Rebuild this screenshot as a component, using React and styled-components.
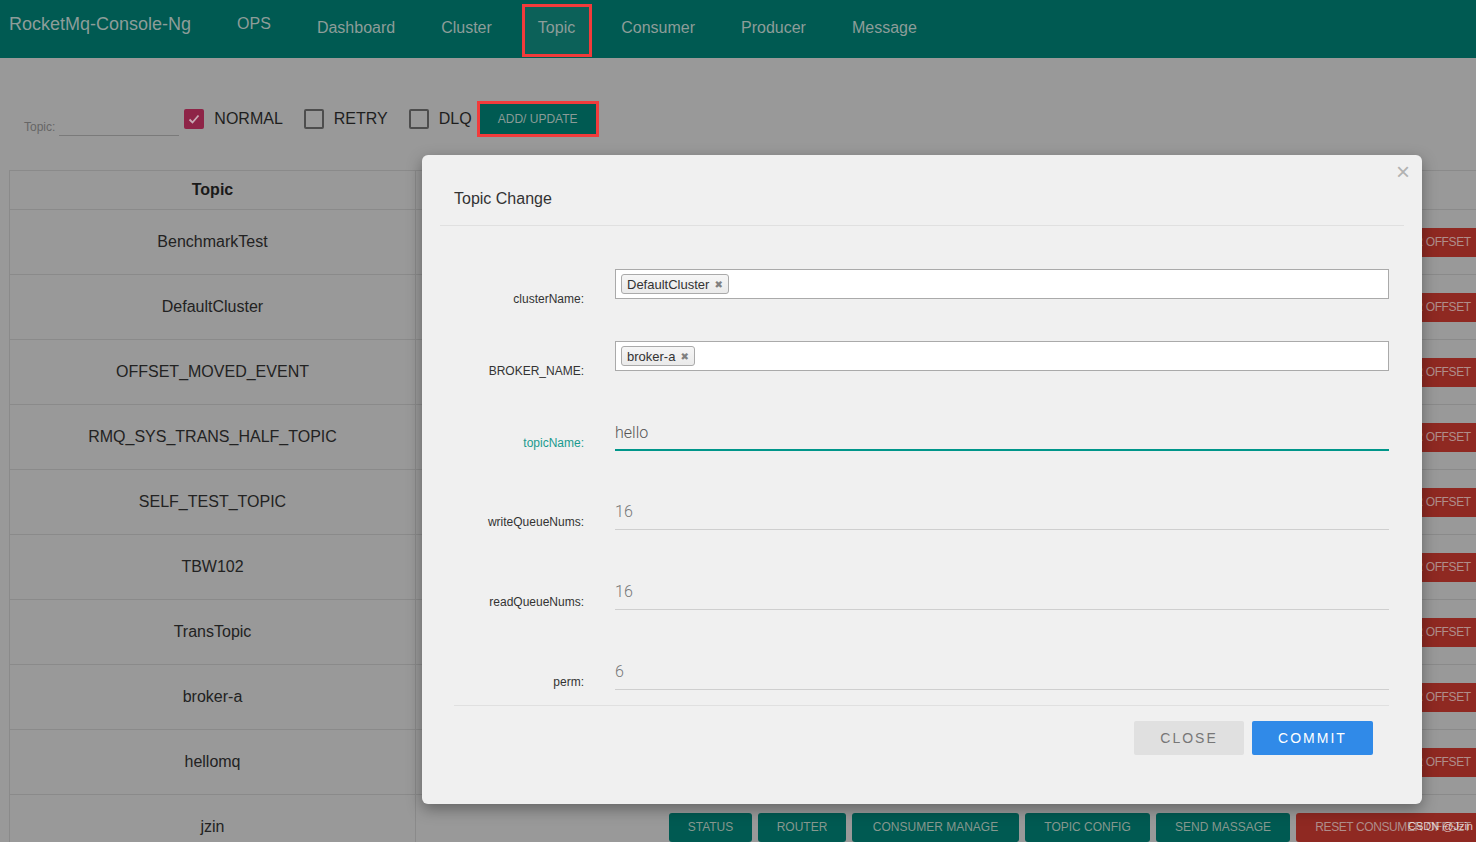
import styled, { createGlobalStyle } from 'styled-components';

const GlobalStyle = createGlobalStyle`
  body {
    margin: 0;
    background: #999999;
    overflow: hidden;
    font-family: "Liberation Sans", Arial, sans-serif;
  }
`;

const Page = styled.div`
  position: relative;
  width: 1476px;
  height: 842px;
  overflow: hidden;
`;

const NavBar = styled.nav`
  display: flex;
  height: 58px;
  padding-left: 9px;
  background: #005a52;
  gap: 16px;
`;

const Brand = styled.div`
  display: flex;
  align-items: center;
  height: 58px;
  padding-bottom: 10px;
  box-sizing: border-box;
  margin-right: 15px;
  font-size: 18px;
  color: #8d9d99;
`;

const NavItem = styled.div`
  display: flex;
  align-items: center;
  box-sizing: border-box;
  height: ${({ $active }) => ($active ? '53px' : '58px')};
  margin: ${({ $active }) => ($active ? '4px -2px 0 -1px' : '0')};
  padding: ${({ $active, $lift }) =>
    $active ? '0 14px 6px 13px' : `0 15px ${$lift ? 10 : 3}px`};
  font-size: 16px;
  color: #8d9d99;
  background: ${({ $active }) => ($active ? '#0c6159' : 'transparent')};
  border: ${({ $active }) => ($active ? '3px solid #f23b3b' : 'none')};
`;

const Main = styled.main`
  padding: 0 9px;
`;

const FilterRow = styled.div`
  display: flex;
  align-items: center;
  height: 36px;
  margin-top: 43px;
  padding-left: 15px;
`;

const SearchGroup = styled.div`
  display: flex;
  align-items: flex-end;
  align-self: flex-end;
  margin-bottom: 1px;
  margin-right: 5px;
`;

const SearchLabel = styled.span`
  font-size: 12px;
  line-height: 14px;
  color: #666;
  margin-right: 4px;
  margin-bottom: 2px;
`;

const SearchInput = styled.div`
  width: 120px;
  height: 20px;
  border-bottom: 1px solid #7a7a7a;
`;

const CheckGroup = styled.label`
  display: flex;
  align-items: center;
  margin-right: ${({ $last }) => ($last ? '5px' : '21px')};
  font-size: 16px;
  color: #1e1e1e;
`;

const CheckBox = styled.span`
  display: flex;
  align-items: center;
  justify-content: center;
  box-sizing: border-box;
  width: 20px;
  height: 20px;
  margin-right: 10px;
  border-radius: 2px;
  background: ${({ $checked }) => ($checked ? '#8e2447' : 'transparent')};
  border: ${({ $checked }) => ($checked ? 'none' : '2px solid #4d4d4d')};
`;

const AddButton = styled.button`
  box-sizing: border-box;
  width: 122px;
  height: 36px;
  border: 3px solid #f23b3b;
  background: #005a52;
  color: #8a9b97;
  font-family: "Liberation Sans", Arial, sans-serif;
  font-size: 12px;
  padding: 0;
`;

const Table = styled.div`
  margin-top: 33px;
  width: 1607px;
  border-top: 1px solid #8a8a8a;
  border-left: 1px solid #8a8a8a;
`;

const Row = styled.div`
  display: grid;
  grid-template-columns: 406px 1200px;
  height: ${({ $head }) => ($head ? '39px' : '65px')};
`;

const Cell = styled.div`
  display: flex;
  align-items: center;
  justify-content: ${({ $ops }) => ($ops ? 'flex-start' : 'center')};
  padding-left: ${({ $ops }) => ($ops ? '253px' : '0')};
  border-right: 1px solid #8a8a8a;
  border-bottom: 1px solid #8a8a8a;
  font-size: 16px;
  font-weight: ${({ $head }) => ($head ? 'bold' : 'normal')};
  color: ${({ $head }) => ($head ? '#1a1a1a' : '#222')};
  white-space: nowrap;
`;

const OpButtons = styled.div`
  display: flex;
  gap: 6px;
`;

const OpButton = styled.span`
  display: flex;
  align-items: center;
  justify-content: center;
  flex-shrink: 0;
  width: ${({ $w }) => $w}px;
  height: 29px;
  border-radius: 3px;
  font-size: 12px;
  letter-spacing: ${({ $danger }) => ($danger ? '-0.4px' : '0')};
  background: ${({ $danger }) => ($danger ? '#8f2922' : '#005a52')};
  color: ${({ $danger }) => ($danger ? '#b08e8b' : '#87988f')};
`;

// Dialog
const Modal = styled.div`
  position: absolute;
  left: 422px;
  top: 155px;
  width: 1000px;
  background: #f0f0f0;
  border-radius: 6px;
  box-shadow: 0 5px 15px rgba(0, 0, 0, 0.35);
`;

const CloseX = styled.span`
  position: absolute;
  right: 12px;
  top: 3px;
  font-size: 24px;
  line-height: 28px;
  color: #b2b2b2;
`;

const ModalHeader = styled.div`
  margin: 0 18px;
  padding: 35px 14px 17px;
  border-bottom: 1px solid #e0e0e0;
  font-size: 16px;
  line-height: 18px;
  color: #333;
`;

const ModalBody = styled.div`
  padding: 0 33px 0 32px;
`;

const FormRow = styled.div`
  display: grid;
  grid-template-columns: 130px 1fr;
  column-gap: 31px;
  align-items: end;
  margin-top: ${({ $gap }) => $gap}px;
`;

const FieldLabel = styled.label`
  text-align: right;
  font-size: 12px;
  line-height: 14px;
  margin-bottom: 1px;
  color: ${({ $focus }) => ($focus ? '#1a9a8e' : '#333')};
`;

const SelectBox = styled.div`
  display: flex;
  align-items: center;
  box-sizing: border-box;
  height: 30px;
  margin-bottom: 8px;
  padding: 0 5px;
  background: #fff;
  border: 1px solid #aaa;
`;

const Tag = styled.span`
  display: flex;
  align-items: center;
  box-sizing: border-box;
  height: 20px;
  padding: 0 5px;
  border: 1px solid #aaa;
  border-radius: 3px;
  background: linear-gradient(#f6f6f6, #eaeaea);
  font-size: 13px;
  color: #333;
`;

const TagRemove = styled.span`
  margin-left: 5px;
  font-family: "DejaVu Sans", sans-serif;
  font-size: 10px;
  color: #808080;
`;

const TextInput = styled.input`
  box-sizing: border-box;
  width: 100%;
  height: 30px;
  padding: 0 0 6px 0;
  border: none;
  border-bottom: ${({ $focus }) => ($focus ? '2px solid #00968a' : '1px solid #cfcfcf')};
  background: transparent;
  outline: none;
  font-family: Roboto, "Open Sans", sans-serif;
  font-weight: 300;
  font-size: 16px;
  color: ${({ $focus }) => ($focus ? '#555' : '#777')};
`;

const ModalFooter = styled.div`
  display: flex;
  justify-content: flex-end;
  gap: 8px;
  margin: 15px 33px 0 32px;
  padding: 15px 16px 49px 0;
  border-top: 1px solid #e0e0e0;
`;

const DialogButton = styled.button`
  width: ${({ $w }) => $w}px;
  height: 34px;
  border: none;
  border-radius: 2px;
  font-family: "Liberation Sans", Arial, sans-serif;
  font-size: 14px;
  letter-spacing: 2px;
  background: ${({ $primary }) => ($primary ? '#308ae8' : '#e0e0e0')};
  color: ${({ $primary }) => ($primary ? '#fff' : '#777')};
`;

const Watermark = styled.span`
  position: absolute;
  left: 1408px;
  top: 820px;
  font-size: 11px;
  color: rgba(255, 255, 255, 0.75);
`;

const navItems = ['OPS', 'Dashboard', 'Cluster', 'Topic', 'Consumer', 'Producer', 'Message'];

const topics = [
  'BenchmarkTest',
  'DefaultCluster',
  'OFFSET_MOVED_EVENT',
  'RMQ_SYS_TRANS_HALF_TOPIC',
  'SELF_TEST_TOPIC',
  'TBW102',
  'TransTopic',
  'broker-a',
  'hellomq',
  'jzin',
];

const ops = [
  { label: 'STATUS', w: 83 },
  { label: 'ROUTER', w: 88 },
  { label: 'CONSUMER MANAGE', w: 167 },
  { label: 'TOPIC CONFIG', w: 125 },
  { label: 'SEND MASSAGE', w: 134 },
  { label: 'RESET CONSUMER OFFSET', w: 194, danger: true },
];

const textFields = [
  { label: 'topicName:', value: 'hello', gap: 42, focus: true },
  { label: 'writeQueueNums:', value: '16', gap: 49 },
  { label: 'readQueueNums:', value: '16', gap: 50 },
  { label: 'perm:', value: '6', gap: 50 },
];

const CheckMark = () => (
  <svg width="14" height="14" viewBox="0 0 14 14">
    <path d="M2.5 7.5 L5.5 10.5 L11.5 3.5" fill="none" stroke="#c9a9b4" strokeWidth="1.8" />
  </svg>
);

export default function App() {
  return (
    <>
      <GlobalStyle />
      <Page>
        <NavBar>
          <Brand>RocketMq-Console-Ng</Brand>
          {navItems.map((item) => (
            <NavItem key={item} $active={item === 'Topic'} $lift={item === 'OPS'}>
              {item}
            </NavItem>
          ))}
        </NavBar>

        <Main>
          <FilterRow>
            <SearchGroup>
              <SearchLabel>Topic:</SearchLabel>
              <SearchInput />
            </SearchGroup>
            <CheckGroup>
              <CheckBox $checked>
                <CheckMark />
              </CheckBox>
              NORMAL
            </CheckGroup>
            <CheckGroup>
              <CheckBox />
              RETRY
            </CheckGroup>
            <CheckGroup $last>
              <CheckBox />
              DLQ
            </CheckGroup>
            <AddButton>ADD/ UPDATE</AddButton>
          </FilterRow>

          <Table>
            <Row $head>
              <Cell $head>Topic</Cell>
              <Cell $head>Operation</Cell>
            </Row>
            {topics.map((t) => (
              <Row key={t}>
                <Cell>{t}</Cell>
                <Cell $ops>
                  <OpButtons>
                    {ops.map((op) => (
                      <OpButton key={op.label} $w={op.w} $danger={op.danger}>
                        {op.label}
                      </OpButton>
                    ))}
                  </OpButtons>
                </Cell>
              </Row>
            ))}
          </Table>
        </Main>

        <Modal>
          <CloseX>×</CloseX>
          <ModalHeader>Topic Change</ModalHeader>
          <ModalBody>
            <FormRow $gap={43}>
              <FieldLabel>clusterName:</FieldLabel>
              <SelectBox>
                <Tag>
                  DefaultCluster<TagRemove>✖</TagRemove>
                </Tag>
              </SelectBox>
            </FormRow>
            <FormRow $gap={34}>
              <FieldLabel>BROKER_NAME:</FieldLabel>
              <SelectBox>
                <Tag>
                  broker-a<TagRemove>✖</TagRemove>
                </Tag>
              </SelectBox>
            </FormRow>
            {textFields.map((f) => (
              <FormRow key={f.label} $gap={f.gap}>
                <FieldLabel $focus={f.focus}>{f.label}</FieldLabel>
                <TextInput readOnly value={f.value} $focus={f.focus} />
              </FormRow>
            ))}
          </ModalBody>
          <ModalFooter>
            <DialogButton $w={110}>CLOSE</DialogButton>
            <DialogButton $w={121} $primary>
              COMMIT
            </DialogButton>
          </ModalFooter>
        </Modal>

        <Watermark>CSDN @Jzin</Watermark>
      </Page>
    </>
  );
}
